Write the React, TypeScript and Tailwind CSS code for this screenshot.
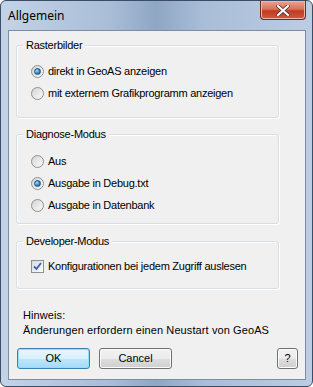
import React from "react";

const ui = { fontFamily: '"Liberation Sans", Arial, sans-serif' };

function GroupBox({
  title,
  className,
  children,
}: {
  title: string;
  className: string;
  children: React.ReactNode;
}) {
  return (
    <div
      className={`relative ml-[7px] w-[263px] rounded-[3px] border border-[#d5dfe5] shadow-[inset_1px_1px_0_#fff,1px_1px_0_#fff] ${className}`}
    >
      <span className="absolute -top-[8px] left-[6px] bg-[#f0f0f0] px-[3px] text-[11px] leading-[14px] tracking-[-0.25px] text-black">
        {title}
      </span>
      {children}
    </div>
  );
}

function Radio({ label, checked }: { label: string; checked?: boolean }) {
  return (
    <div className="flex h-[13px] items-center pl-[14px]">
      <span className="flex h-[13px] w-[13px] items-center justify-center rounded-full border border-[#8e8f8f] bg-gradient-to-br from-[#d5d5d5] to-[#fbfbfb]">
        {checked && (
          <span className="h-[7px] w-[7px] rounded-full border border-[#1c4e84] bg-[radial-gradient(circle_at_35%_35%,#a8e0fb,#2a7fc0_60%,#0f4d8b)]" />
        )}
      </span>
      <span className="ml-[4px] text-[11px] leading-[13px] tracking-[-0.25px] text-black">
        {label}
      </span>
    </div>
  );
}

function Checkbox({ label }: { label: string }) {
  return (
    <div className="flex h-[13px] items-center pl-[14px]">
      <span className="flex h-[13px] w-[13px] items-center justify-center border border-[#8e8f8f] bg-gradient-to-br from-[#d4dbe6] to-[#fdfdfd]">
        <svg width="9" height="9" viewBox="0 0 9 9">
          <path d="M1 4.5 L3.5 7 L8 1" fill="none" stroke="#3a5fa8" strokeWidth="1.8" />
        </svg>
      </span>
      <span className="ml-[4px] text-[11px] leading-[13px] tracking-[-0.25px] text-black">
        {label}
      </span>
    </div>
  );
}

function Btn({
  children,
  className,
  primary,
}: {
  children: React.ReactNode;
  className: string;
  primary?: boolean;
}) {
  return (
    <button
      className={
        primary
          ? `flex h-[21px] items-center justify-center rounded-[3px] border border-[#3c7fb1] bg-[linear-gradient(#eaf6fd_0%,#d9f0fc_50%,#bee6fd_51%,#a7d9f5_100%)] text-[11px] text-black shadow-[inset_0_0_0_1px_#8fe0f8] ${className}`
          : `flex h-[21px] items-center justify-center rounded-[3px] border border-[#707070] bg-[linear-gradient(#f2f2f2_0%,#ebebeb_50%,#dddddd_51%,#cfcfcf_100%)] text-[11px] text-black shadow-[inset_0_0_0_1px_#fcfcfc] ${className}`
      }
    >
      {children}
    </button>
  );
}

export default function App() {
  return (
    <div className="h-[387px] w-[313px] bg-white" style={ui}>
      <div className="flex h-[387px] w-[313px] flex-col rounded-[6px] border border-[#3b4d66] bg-[linear-gradient(90deg,#c3d3e7_0%,#a9bdd7_35%,#8fa6c4_50%,#a9bdd7_65%,#bccde3_100%)] pb-[6px] pl-[7px] pr-[6px]">
        {/* title bar */}
        <div className="flex h-[29px] shrink-0 items-start">
          <span
            className="mt-[7px] text-[12px] leading-[16px] text-black"
            style={{ fontFamily: '"Noto Sans", "Open Sans", sans-serif' }}
          >
            Allgemein
          </span>
          <div className="ml-auto flex h-[19px] w-[46px] items-center justify-center rounded-b-[4px] border border-t-0 border-[#6a2a25] bg-[linear-gradient(#e8a493_0%,#d9725d_45%,#c23b20_55%,#d0583f_100%)] shadow-[inset_0_0_0_1px_#f0b6a6]">
            <svg width="14" height="11" viewBox="0 0 14 11">
              <path
                d="M2 1 L12 10 M12 1 L2 10"
                stroke="#3c2a28"
                strokeWidth="3.6"
                strokeLinecap="square"
              />
              <path
                d="M2 1 L12 10 M12 1 L2 10"
                stroke="#ffffff"
                strokeWidth="2.2"
                strokeLinecap="square"
              />
            </svg>
          </div>
        </div>

        {/* client area */}
        <div className="flex flex-1 flex-col border border-[#7b8ca3] bg-[#f0f0f0]">
          <GroupBox title="Rasterbilder" className="mt-[14px] pb-[17px] pt-[19px]">
            <div className="flex flex-col gap-[9px]">
              <Radio label="direkt in GeoAS anzeigen" checked />
              <Radio label="mit externem Grafikprogramm anzeigen" />
            </div>
          </GroupBox>

          <GroupBox title="Diagnose-Modus" className="mt-[16px] pb-[11px] pt-[20px]">
            <div className="flex flex-col gap-[9px]">
              <Radio label="Aus" />
              <Radio label="Ausgabe in Debug.txt" checked />
              <Radio label="Ausgabe in Datenbank" />
            </div>
          </GroupBox>

          <GroupBox title="Developer-Modus" className="mt-[17px] pb-[15px] pt-[18px]">
            <Checkbox label="Konfigurationen bei jedem Zugriff auslesen" />
          </GroupBox>

          <div className="ml-[14px] mt-[19px] text-[11px] leading-[15px] tracking-[0.1px] text-black">
            <div>Hinweis:</div>
            <div>Änderungen erfordern einen Neustart von GeoAS</div>
          </div>

          <div className="mt-[10px] flex items-center pl-[8px] pr-[7px]">
            <Btn primary className="w-[73px]">
              OK
            </Btn>
            <Btn className="ml-[9px] w-[73px]">Cancel</Btn>
            <Btn className="ml-auto w-[21px]">?</Btn>
          </div>
        </div>
      </div>
    </div>
  );
}
